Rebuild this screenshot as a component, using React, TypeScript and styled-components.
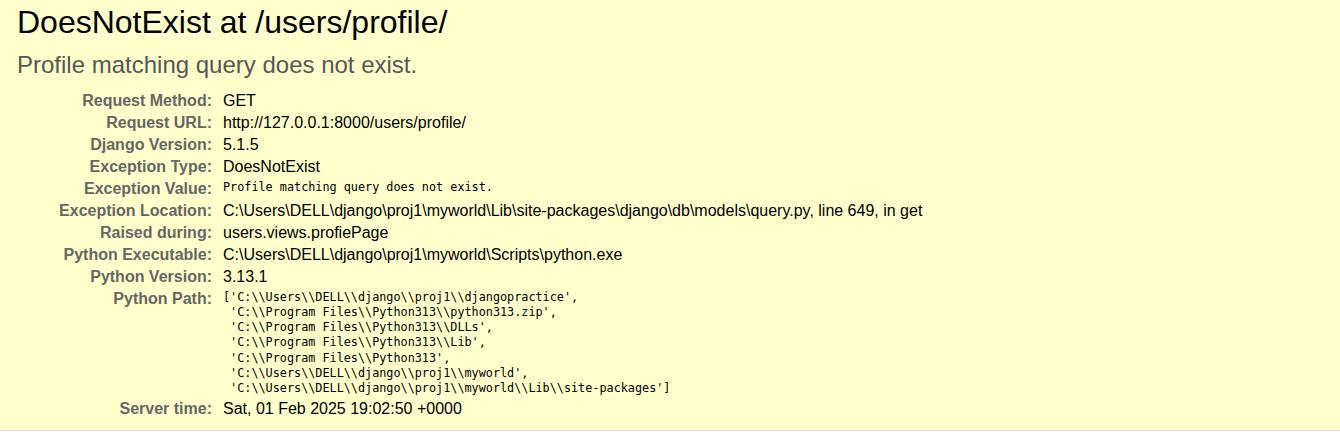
import React from "react";
import styled, { createGlobalStyle } from "styled-components";

const GlobalStyle = createGlobalStyle`
  html, body { margin: 0; padding: 0; }
  body {
    background: #fff;
    color: #000;
    font-family: "Liberation Sans", Arial, sans-serif;
    font-size: 16px;
  }
`;

const Summary = styled.header`
  background: #ffc;
  padding: 4px 20px 10px 17px;
  border-bottom: 1px solid #ddd;
`;

const Title = styled.h1`
  margin: 0;
  font-weight: normal;
  font-size: 32px;
  line-height: 37px;
`;

const ExceptionValue = styled.pre`
  margin: 10px 0 11px 0;
  font-family: "Liberation Sans", Arial, sans-serif;
  font-size: 24px;
  line-height: 28px;
  color: #575757;
  white-space: pre-wrap;
`;

const MetaTable = styled.table`
  border: none;
  border-collapse: collapse;
  width: 100%;
  background: transparent;
`;

const Label = styled.th`
  width: 192px;
  text-align: right;
  vertical-align: top;
  color: #666;
  font-weight: bold;
  padding: 2px 8px 2px 3px;
  line-height: 18px;
  white-space: nowrap;
`;

const Value = styled.td`
  vertical-align: top;
  padding: 2px 3px;
  line-height: 18px;
`;

const Code = styled.pre`
  margin: 0;
  font-family: "DejaVu Sans Mono", "Liberation Mono", monospace;
  font-size: 11.8px;
  line-height: 15.15px;
  white-space: pre-wrap;
`;

type Row = { label: string; value: string; mono?: boolean };

const rows: Row[] = [
  { label: "Request Method:", value: "GET" },
  { label: "Request URL:", value: "http://127.0.0.1:8000/users/profile/" },
  { label: "Django Version:", value: "5.1.5" },
  { label: "Exception Type:", value: "DoesNotExist" },
  { label: "Exception Value:", value: "Profile matching query does not exist.", mono: true },
  {
    label: "Exception Location:",
    value:
      "C:\\Users\\DELL\\django\\proj1\\myworld\\Lib\\site-packages\\django\\db\\models\\query.py, line 649, in get",
  },
  { label: "Raised during:", value: "users.views.profiePage" },
  { label: "Python Executable:", value: "C:\\Users\\DELL\\django\\proj1\\myworld\\Scripts\\python.exe" },
  { label: "Python Version:", value: "3.13.1" },
  {
    label: "Python Path:",
    mono: true,
    value: [
      "['C:\\\\Users\\\\DELL\\\\django\\\\proj1\\\\djangopractice',",
      " 'C:\\\\Program Files\\\\Python313\\\\python313.zip',",
      " 'C:\\\\Program Files\\\\Python313\\\\DLLs',",
      " 'C:\\\\Program Files\\\\Python313\\\\Lib',",
      " 'C:\\\\Program Files\\\\Python313',",
      " 'C:\\\\Users\\\\DELL\\\\django\\\\proj1\\\\myworld',",
      " 'C:\\\\Users\\\\DELL\\\\django\\\\proj1\\\\myworld\\\\Lib\\\\site-packages']",
    ].join("\n"),
  },
  { label: "Server time:", value: "Sat, 01 Feb 2025 19:02:50 +0000" },
];

export default function App() {
  return (
    <>
      <GlobalStyle />
      <Summary>
        <Title>DoesNotExist at /users/profile/</Title>
        <ExceptionValue>Profile matching query does not exist.</ExceptionValue>
        <MetaTable>
          <tbody>
            {rows.map((r) => (
              <tr key={r.label}>
                <Label>{r.label}</Label>
                <Value>{r.mono ? <Code>{r.value}</Code> : r.value}</Value>
              </tr>
            ))}
          </tbody>
        </MetaTable>
      </Summary>
    </>
  );
}
